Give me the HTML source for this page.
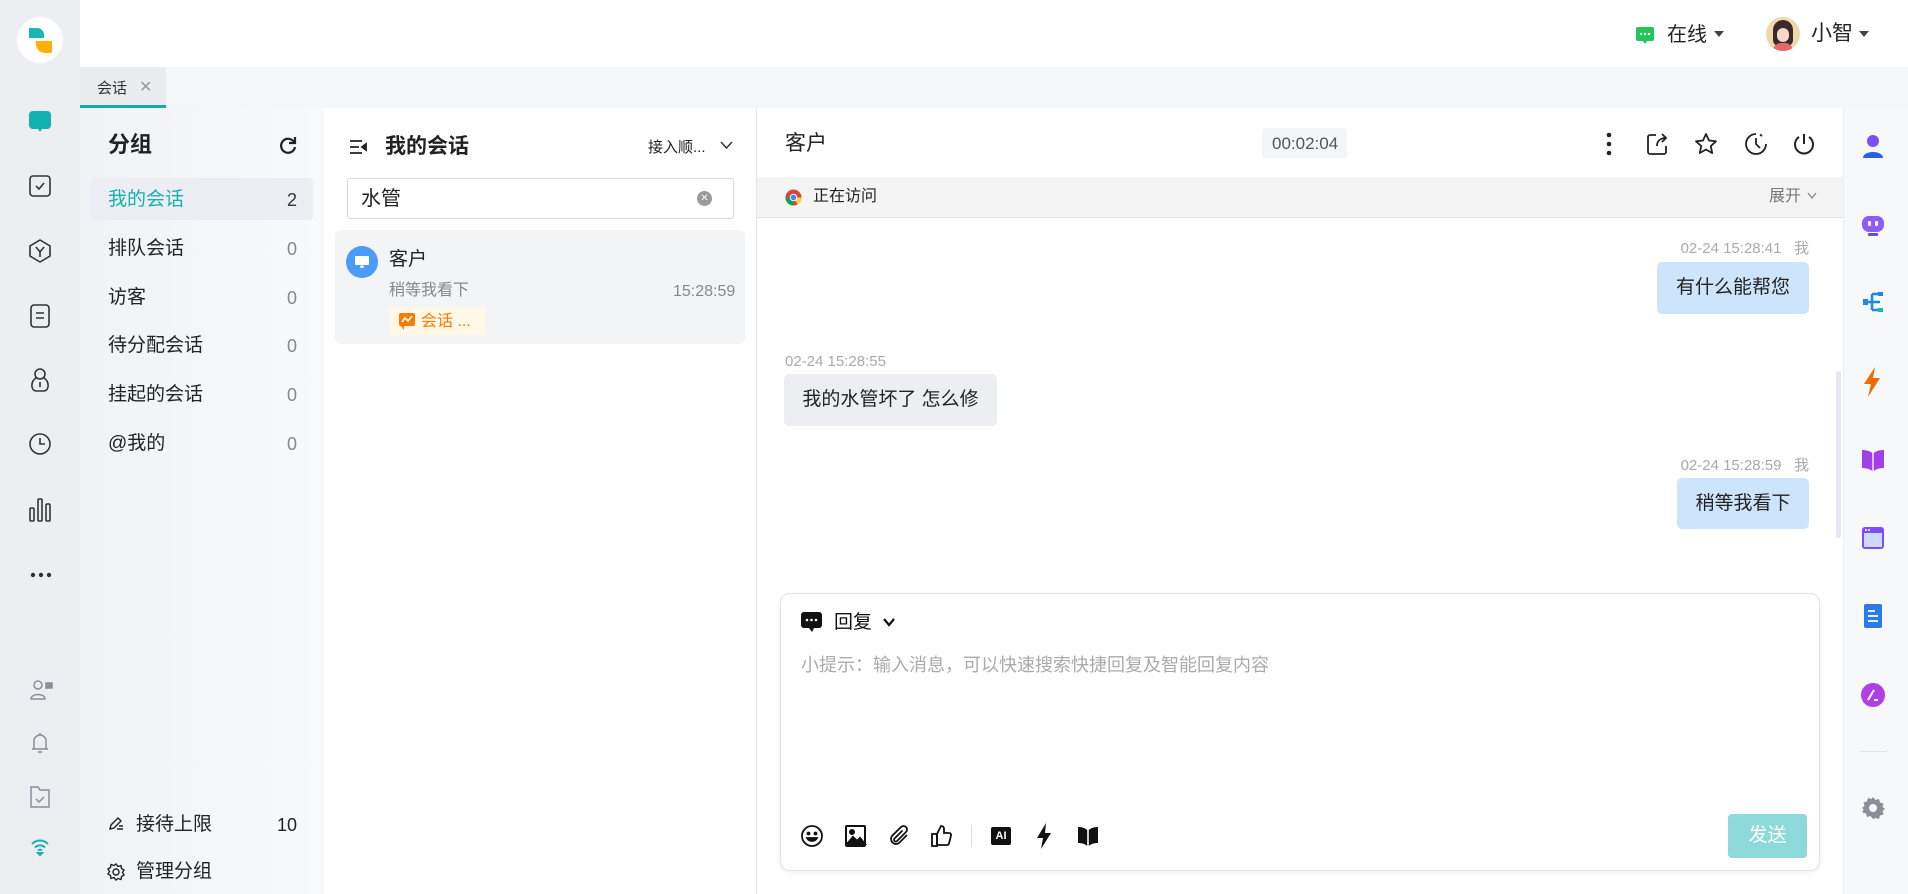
<!DOCTYPE html>
<html><head><meta charset="utf-8"><style>
*{box-sizing:border-box;margin:0;padding:0}
body{width:1908px;height:894px;overflow:hidden;background:#fff;font-family:"Liberation Sans","Noto Sans CJK SC",sans-serif;color:#222;position:relative}
.a{position:absolute}
.t{position:absolute;white-space:nowrap;line-height:1}
svg{position:absolute;overflow:visible}
</style></head><body>
<div class="a" style="left:0;top:0;width:80px;height:894px;background:#eceef1"></div>
<div class="a" style="left:17px;top:17px;width:46px;height:46px;border-radius:50%;background:#fff"></div>
<svg style="left:28px;top:27px" width="26" height="27" viewBox="0 0 26 27"><path d="M1 1h8a7 7 0 0 1 7 7v3H1z" fill="#1bb5b5"/><path d="M8 14h16v10a2 2 0 0 1-2 2h-5a9 9 0 0 1-9-9z" fill="#ffb000"/></svg>
<svg style="left:28px;top:110px" width="24" height="24" viewBox="0 0 24 24"><rect x="1" y="1" width="22" height="18" rx="4" fill="#14b1b1"/><path d="M10 19l2 3 2-3z" fill="#14b1b1"/></svg>
<svg style="left:29px;top:175px" width="22" height="22" viewBox="0 0 22 22" fill="none" stroke="#333" stroke-width="1.6"><rect x="1" y="1" width="20" height="20" rx="3"/><path d="M7 11l3 3 5-6"/></svg>
<svg style="left:29px;top:239px" width="22" height="24" viewBox="0 0 22 24" fill="none" stroke="#333" stroke-width="1.6"><path d="M11 1l10 6v10l-10 6-10-6V7z"/><path d="M7 8l4 5 4-5M11 13v5"/></svg>
<svg style="left:30px;top:304px" width="20" height="24" viewBox="0 0 20 24" fill="none" stroke="#333" stroke-width="1.6"><rect x="1" y="1" width="18" height="22" rx="3"/><path d="M6 9h8M6 14h8"/></svg>
<svg style="left:29px;top:368px" width="22" height="24" viewBox="0 0 22 24" fill="none" stroke="#333" stroke-width="1.6"><circle cx="11" cy="6" r="5"/><path d="M7 10c-5 3-6 12 0 13h8c6-1 5-10 0-13M11 14v5"/></svg>
<svg style="left:29px;top:433px" width="22" height="22" viewBox="0 0 22 22" fill="none" stroke="#333" stroke-width="1.6"><circle cx="11" cy="11" r="10"/><path d="M11 5v6h5"/></svg>
<svg style="left:29px;top:498px" width="22" height="24" viewBox="0 0 22 24" fill="none" stroke="#333" stroke-width="1.6"><rect x="1" y="10" width="4" height="13" rx="1"/><rect x="9" y="1" width="4" height="22" rx="1"/><rect x="17" y="6" width="4" height="17" rx="1"/></svg>
<svg style="left:30px;top:572px" width="22" height="6" viewBox="0 0 22 6" fill="#333"><circle cx="3" cy="3" r="2.2"/><circle cx="11" cy="3" r="2.2"/><circle cx="19" cy="3" r="2.2"/></svg>
<svg style="left:30px;top:680px" width="24" height="20" viewBox="0 0 24 20" fill="none" stroke="#8a8f99" stroke-width="1.5"><circle cx="8" cy="5" r="4"/><path d="M1 19c0-6 14-6 14 0z"/><rect x="16" y="3" width="6" height="5" fill="#8a8f99"/></svg>
<svg style="left:31px;top:732px" width="18" height="22" viewBox="0 0 18 22" fill="none" stroke="#8a8f99" stroke-width="1.5"><path d="M9 1v2M3 17V9a6 6 0 0 1 12 0v8zM1 17h16M7 20h4"/></svg>
<svg style="left:30px;top:786px" width="20" height="22" viewBox="0 0 20 22" fill="none" stroke="#8a8f99" stroke-width="1.5"><path d="M1 1h7l2 3h9v17H1z"/><path d="M6 13l3 3 5-5"/></svg>
<svg style="left:31px;top:839px" width="18" height="16" viewBox="0 0 18 16" fill="none" stroke="#14b1b1" stroke-width="2"><path d="M1 5a11 11 0 0 1 16 0M4 8.5a7 7 0 0 1 10 0M7 11.5a3 3 0 0 1 4 0"/><path d="M9 16l-2-2h4z" fill="#14b1b1"/></svg>

<svg style="left:1636px;top:27px" width="18" height="18" viewBox="0 0 18 18"><rect x="0" y="0" width="18" height="14" rx="2" fill="#22c55e"/><path d="M7 14l2 3 2-3z" fill="#22c55e"/><circle cx="5" cy="7" r="1.2" fill="#fff"/><circle cx="9" cy="7" r="1.2" fill="#fff"/><circle cx="13" cy="7" r="1.2" fill="#fff"/></svg>
<div class="t" style="left:1667px;top:25px;font-size:20px;color:#222">在线</div>
<svg style="left:1714px;top:31px" width="10" height="6" viewBox="0 0 10 6"><path d="M0 0h10L5 6z" fill="#444"/></svg>
<div class="a" style="left:1766px;top:17px;width:34px;height:34px;border-radius:50%;background:#f0d9a8;overflow:hidden"><div class="a" style="left:7px;top:3px;width:20px;height:26px;border-radius:10px 10px 6px 6px;background:#3a2a2a"></div><div class="a" style="left:11px;top:11px;width:12px;height:14px;border-radius:6px;background:#f7d8c8"></div><div class="a" style="left:7px;top:26px;width:20px;height:10px;border-radius:8px 8px 0 0;background:#e46a6a"></div></div>
<div class="t" style="left:1811px;top:23px;font-size:21px;color:#222">小智</div>
<svg style="left:1859px;top:31px" width="10" height="6" viewBox="0 0 10 6"><path d="M0 0h10L5 6z" fill="#444"/></svg>

<div class="a" style="left:80px;top:67px;width:1828px;height:41px;background:#f5f6f7"></div>
<div class="a" style="left:80px;top:67px;width:86px;height:41px;background:#eaecef;border-bottom:3px solid #14a9a9"></div>
<div class="t" style="left:97px;top:81px;font-size:15px;color:#333">会话</div>
<div class="t" style="left:139px;top:80px;font-size:16px;color:#999">✕</div>

<div class="a" style="left:80px;top:108px;width:244px;height:786px;background:linear-gradient(90deg,#f1f2f5,#f8f9fa)"></div>
<div class="t" style="left:108px;top:134px;font-size:22px;font-weight:bold;color:#222">分组</div>
<svg style="left:279px;top:136px" width="18" height="18" viewBox="0 0 18 18" fill="none" stroke="#222" stroke-width="2.2"><path d="M15 6A7 7 0 1 0 16 11"/><path d="M16 1v6h-6" fill="none"/></svg>
<div class="a" style="left:91px;top:178px;width:222px;height:42px;background:#eceef3;border-radius:4px"></div>
<div class="t" style="left:108px;top:190px;font-size:19px;color:#14b1b1">我的会话</div><div class="t" style="left:287px;top:191px;font-size:18px;color:#333">2</div>
<div class="t" style="left:108px;top:239px;font-size:19px">排队会话</div><div class="t" style="left:287px;top:240px;font-size:18px;color:#888">0</div>
<div class="t" style="left:108px;top:288px;font-size:19px">访客</div><div class="t" style="left:287px;top:289px;font-size:18px;color:#888">0</div>
<div class="t" style="left:108px;top:336px;font-size:19px">待分配会话</div><div class="t" style="left:287px;top:337px;font-size:18px;color:#888">0</div>
<div class="t" style="left:108px;top:385px;font-size:19px">挂起的会话</div><div class="t" style="left:287px;top:386px;font-size:18px;color:#888">0</div>
<div class="t" style="left:108px;top:434px;font-size:19px">@我的</div><div class="t" style="left:287px;top:435px;font-size:18px;color:#888">0</div>
<svg style="left:108px;top:816px" width="16" height="16" viewBox="0 0 16 16" fill="none" stroke="#222" stroke-width="1.4"><path d="M2 13l1-4 7-7 3 3-7 7zM9 13h6M11 10h4"/></svg>
<div class="t" style="left:136px;top:815px;font-size:19px">接待上限</div><div class="t" style="left:277px;top:816px;font-size:18px">10</div>
<svg style="left:107px;top:863px" width="18" height="18" viewBox="0 0 18 18" fill="none" stroke="#222" stroke-width="1.4"><circle cx="9" cy="9" r="3"/><path d="M9 1l2 2.5 3-1 .5 3 2.5 1.5-1.5 2.5 1.5 2.5-2.5 1.5-.5 3-3-1L9 17l-2-2.5-3 1-.5-3L1 11l1.5-2.5L1 6l2.5-1.5.5-3 3 1z"/></svg>
<div class="t" style="left:136px;top:862px;font-size:19px">管理分组</div>

<div class="a" style="left:756px;top:108px;width:1px;height:786px;background:#e8e8ec"></div>
<svg style="left:349px;top:139px" width="18" height="16" viewBox="0 0 18 16" fill="none" stroke="#222" stroke-width="1.8"><path d="M1 2h12M1 8h9M1 14h12"/><path d="M17 5l-4 3 4 3z" fill="#222"/></svg>
<div class="t" style="left:385px;top:136px;font-size:21px;font-weight:bold">我的会话</div>
<div class="t" style="left:648px;top:140px;font-size:15px;color:#222">接入顺...</div>
<svg style="left:720px;top:141px" width="13" height="8" viewBox="0 0 13 8" fill="none" stroke="#333" stroke-width="1.5"><path d="M1 1l5.5 6L12 1"/></svg>
<div class="a" style="left:347px;top:178px;width:387px;height:41px;border:1px solid #d8d8dc;border-radius:3px"></div>
<div class="t" style="left:361px;top:189px;font-size:20px">水管</div>
<div class="a" style="left:697px;top:191px;width:15px;height:15px;border-radius:50%;background:#9a9a9e;color:#fff;font-size:10px;line-height:15px;text-align:center">✕</div>
<div class="a" style="left:335px;top:230px;width:410px;height:114px;background:#f3f4f6;border-radius:6px"></div>
<div class="a" style="left:346px;top:246px;width:32px;height:32px;border-radius:50%;background:#4a9cf8"></div>
<svg style="left:354px;top:255px" width="16" height="14" viewBox="0 0 16 14"><rect x="1" y="1" width="14" height="9" rx="1" fill="#fff"/><path d="M6 12h4M8 10v2" stroke="#fff" stroke-width="1.5"/></svg>
<div class="t" style="left:389px;top:250px;font-size:19px">客户</div>
<div class="t" style="left:389px;top:283px;font-size:16px;color:#888">稍等我看下</div>
<div class="t" style="left:673px;top:284px;font-size:16px;color:#888">15:28:59</div>
<div class="a" style="left:389px;top:307px;width:97px;height:28px;background:#fff8e6;border-radius:2px"></div>
<svg style="left:399px;top:313px" width="16" height="17" viewBox="0 0 16 17"><rect x="0" y="0" width="16" height="13" rx="2" fill="#ff7a00"/><path d="M2 13l3 4v-4z" fill="#ff7a00"/><path d="M3 9l3-4 3 3 4-5" stroke="#fff" stroke-width="1.6" fill="none"/></svg>
<div class="t" style="left:421px;top:314px;font-size:16px;color:#ff7a00">会话 ...</div>

<div class="t" style="left:785px;top:133px;font-size:21px">客户</div>
<div class="a" style="left:1262px;top:128px;width:85px;height:30px;background:#f4f5f7;border-radius:3px"></div>
<div class="t" style="left:1272px;top:135px;font-size:17px;color:#555">00:02:04</div>
<svg style="left:1605px;top:132px" width="8" height="24" viewBox="0 0 8 24" fill="#222"><circle cx="4" cy="3" r="2.3"/><circle cx="4" cy="12" r="2.3"/><circle cx="4" cy="21" r="2.3"/></svg>
<svg style="left:1647px;top:133px" width="22" height="22" viewBox="0 0 22 22" fill="none" stroke="#222" stroke-width="1.8"><path d="M9 2H3a2 2 0 0 0-2 2v15a2 2 0 0 0 2 2h14a2 2 0 0 0 2-2v-6"/><path d="M10 13c0-5 3-8 9-8M15 1l4 4-4 4"/></svg>
<svg style="left:1694px;top:132px" width="24" height="24" viewBox="0 0 24 24" fill="none" stroke="#222" stroke-width="1.8" stroke-linejoin="round"><path d="M12 2l3 6.5 7 .8-5.2 4.8 1.4 7L12 17.5 5.8 21l1.4-7L2 9.3l7-.8z"/></svg>
<svg style="left:1744px;top:132px" width="24" height="24" viewBox="0 0 24 24" fill="none" stroke="#222" stroke-width="1.8"><path d="M12 2a10 10 0 1 0 10 10"/><path d="M12 6v6l4 4M16 2.5l2 1.5"/></svg>
<svg style="left:1792px;top:132px" width="24" height="24" viewBox="0 0 24 24" fill="none" stroke="#222" stroke-width="2"><path d="M12 2v10M7 5a9 9 0 1 0 10 0"/></svg>

<div class="a" style="left:757px;top:177px;width:1086px;height:41px;background:#f4f4f5;border-bottom:1px solid #e3e3e6"></div>
<svg style="left:785px;top:189px" width="17" height="17" viewBox="0 0 18 18"><circle cx="9" cy="9" r="8.5" fill="#db4437"/><path d="M9 9L1.7 13.2A8.5 8.5 0 0 0 9 17.5z" fill="#0f9d58"/><path d="M9 9l4.3 7.4A8.5 8.5 0 0 0 17.5 9z" fill="#ffcd40"/><path d="M9 9L.5 9a8.5 8.5 0 0 0 1.2 4.2z" fill="#0f9d58"/><circle cx="9" cy="9" r="4" fill="#fff"/><circle cx="9" cy="9" r="3" fill="#4285f4"/></svg>
<div class="t" style="left:813px;top:189px;font-size:16px;color:#222">正在访问</div>
<div class="t" style="left:1769px;top:189px;font-size:16px;color:#777">展开</div>
<svg style="left:1807px;top:192px" width="10" height="7" viewBox="0 0 10 7" fill="none" stroke="#888" stroke-width="1.3"><path d="M1 1l4 5 4-5"/></svg>

<div class="t" style="right:99px;top:241px;font-size:15px;color:#aaa">02-24 15:28:41&nbsp;&nbsp;&nbsp;我</div>
<div class="a" style="left:1657px;top:262px;width:152px;height:52px;background:#cce5fc;border-radius:5px;font-size:19px;line-height:52px;text-align:center">有什么能帮您</div>
<div class="t" style="left:785px;top:354px;font-size:15px;color:#aaa">02-24 15:28:55</div>
<div class="a" style="left:784px;top:374px;width:213px;height:52px;background:#eceef1;border-radius:5px;font-size:19px;line-height:52px;text-align:center">我的水管坏了 怎么修</div>
<div class="t" style="right:99px;top:458px;font-size:15px;color:#aaa">02-24 15:28:59&nbsp;&nbsp;&nbsp;我</div>
<div class="a" style="left:1677px;top:478px;width:132px;height:51px;background:#cce5fc;border-radius:5px;font-size:19px;line-height:51px;text-align:center">稍等我看下</div>
<div class="a" style="left:1836px;top:371px;width:5px;height:167px;background:#e3e8f2;border-radius:3px"></div>

<div class="a" style="left:780px;top:593px;width:1040px;height:278px;border:1px solid #e2e2e8;border-radius:10px;box-shadow:0 2px 6px rgba(0,0,0,.06);background:#fff"></div>
<svg style="left:801px;top:612px" width="21" height="21" viewBox="0 0 21 21"><rect x="0" y="0" width="21" height="16" rx="3" fill="#111"/><path d="M8 16l3 4 2-4z" fill="#111"/><circle cx="6" cy="8" r="1.3" fill="#fff"/><circle cx="10.5" cy="8" r="1.3" fill="#fff"/><circle cx="15" cy="8" r="1.3" fill="#fff"/></svg>
<div class="t" style="left:834px;top:613px;font-size:19px;color:#111">回复</div>
<svg style="left:883px;top:618px" width="12" height="9" viewBox="0 0 12 9" fill="none" stroke="#111" stroke-width="2.2"><path d="M1 1l5 6 5-6"/></svg>
<div class="t" style="left:801px;top:656px;font-size:18px;color:#aaa">小提示：输入消息，可以快速搜索快捷回复及智能回复内容</div>
<svg style="left:801px;top:825px" width="22" height="22" viewBox="0 0 22 22" fill="none" stroke="#111" stroke-width="1.8"><circle cx="11" cy="11" r="10"/><circle cx="7.5" cy="8.5" r="1" fill="#111"/><circle cx="14.5" cy="8.5" r="1" fill="#111"/><path d="M6 13c2 4 8 4 10 0z" fill="#111"/></svg>
<svg style="left:845px;top:825px" width="21" height="22" viewBox="0 0 21 22" fill="none" stroke="#111" stroke-width="2"><rect x="1" y="1" width="19" height="20" rx="1"/><circle cx="7" cy="7" r="2" fill="#111"/><path d="M2 19l6-7 4 4 3-3 5 6z" fill="#111"/></svg>
<svg style="left:888px;top:825px" width="22" height="22" viewBox="0 0 22 22" fill="none" stroke="#111" stroke-width="1.8"><path d="M19 10l-8 8a5 5 0 0 1-7-7l9-9a3.3 3.3 0 0 1 5 5l-9 9a1.7 1.7 0 0 1-2.5-2.5l8-8"/></svg>
<svg style="left:931px;top:824px" width="21" height="23" viewBox="0 0 21 23" fill="none" stroke="#111" stroke-width="1.8"><path d="M6 10l4-8c2 0 3 1 3 3v4h5a2 2 0 0 1 2 2.5l-2 8a2 2 0 0 1-2 1.5H6z"/><rect x="1" y="10" width="5" height="12"/></svg>
<div class="a" style="left:971px;top:825px;width:1px;height:22px;background:#ddd"></div>
<div class="a" style="left:991px;top:827px;width:20px;height:18px;background:#111;border-radius:2px;color:#fff;font-size:11px;font-weight:bold;line-height:18px;text-align:center">AI</div>
<svg style="left:1036px;top:823px" width="16" height="26" viewBox="0 0 16 26"><path d="M10 0L1 15h6l-2 11 10-16H9z" fill="#111"/></svg>
<svg style="left:1078px;top:826px" width="20" height="20" viewBox="0 0 20 20"><path d="M0 1c4 0 7 1 9.2 3v16C7 18 4 17 0 17zM20 1c-4 0-7 1-9.2 3v16c2.2-2 5.2-3 9.2-3z" fill="#111"/></svg>
<div class="a" style="left:1728px;top:814px;width:79px;height:44px;background:#8ed9d9;border-radius:4px;color:#fff;font-size:19px;line-height:44px;text-align:center">发送</div>

<div class="a" style="left:1843px;top:108px;width:65px;height:786px;background:#f7f8fa;border-left:1px solid #eceef2"></div>
<svg style="left:1862px;top:134px" width="22" height="26" viewBox="0 0 22 26"><circle cx="11" cy="7" r="6" fill="#7b4ff0"/><path d="M1 24c0-8 20-8 20 0z" fill="#2a5ee8"/></svg>
<svg style="left:1861px;top:213px" width="24" height="24" viewBox="0 0 24 24"><rect x="1" y="3" width="22" height="16" rx="7" fill="#8b5cf6"/><rect x="7" y="8" width="3" height="5" rx="1" fill="#fff"/><rect x="14" y="8" width="3" height="5" rx="1" fill="#fff"/><rect x="7" y="20" width="10" height="3" rx="1" fill="#6a47e8"/></svg>
<svg style="left:1862px;top:290px" width="22" height="24" viewBox="0 0 22 24" fill="none" stroke="#1e88e5" stroke-width="2.5"><path d="M4 12h6M10 4v16M10 4h8M10 12h8M10 20h8"/><rect x="1" y="9" width="5" height="6" fill="#1e88e5" stroke="none"/><rect x="16" y="2" width="5" height="4" fill="#1e88e5" stroke="none"/><rect x="16" y="18" width="5" height="4" fill="#1bb5b5" stroke="none"/></svg>
<svg style="left:1864px;top:367px" width="16" height="30" viewBox="0 0 16 30"><path d="M11 0L0 17h7l-3 13 12-19H9z" fill="#f06a00"/></svg>
<svg style="left:1862px;top:449px" width="22" height="22" viewBox="0 0 22 22"><path d="M0 1c4 0 8 1 10.3 3v18C8 20 4 19 0 19zM22 1c-4 0-8 1-10.3 3v18c2.3-2 6.3-3 10.3-3z" fill="#a13fe8"/></svg>
<svg style="left:1862px;top:527px" width="22" height="22" viewBox="0 0 22 22"><rect x="0" y="0" width="22" height="22" rx="3" fill="#7c4dff"/><rect x="2" y="6" width="18" height="14" fill="#cfd8ff"/><circle cx="4" cy="3" r="1" fill="#fff"/><circle cx="7" cy="3" r="1" fill="#fff"/></svg>
<svg style="left:1864px;top:604px" width="18" height="24" viewBox="0 0 18 24"><rect x="0" y="0" width="18" height="24" rx="2" fill="#2a7be8"/><path d="M4 7h7M4 12h10M4 17h10" stroke="#fff" stroke-width="1.8"/></svg>
<svg style="left:1861px;top:683px" width="24" height="24" viewBox="0 0 24 24"><circle cx="12" cy="12" r="12" fill="#b03ee6"/><path d="M7 17l6-10M13 17h4" stroke="#fff" stroke-width="2"/></svg>
<div class="a" style="left:1860px;top:751px;width:27px;height:1px;background:#e2e4ea"></div>
<svg style="left:1862px;top:797px" width="22" height="22" viewBox="0 0 22 22"><path d="M11 0l2.5 3 3.5-1 1 3.5 3.5 1-1 3.5 2.5 2-2.5 2 1 3.5-3.5 1-1 3.5-3.5-1L11 22l-2.5-3-3.5 1-1-3.5-3.5-1 1-3.5L0 11l2.5-2-1-3.5 3.5-1 1-3.5 3.5 1z" fill="#8a8f99"/><circle cx="11" cy="11" r="4" fill="#f7f8fa"/></svg>
</body></html>
